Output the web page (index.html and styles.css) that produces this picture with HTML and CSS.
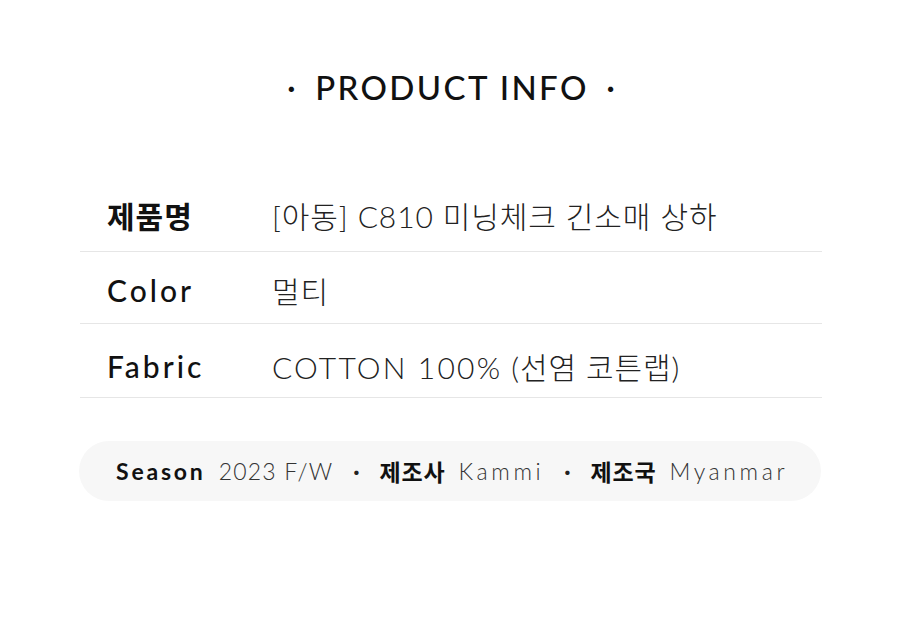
FILE: index.html
```html
<!DOCTYPE html>
<html lang="ko">
<head>
<meta charset="utf-8">
<link rel="stylesheet" href="styles.css">
</head>
<body>
<div class="page">
  <h1 class="title"><span class="dot">·</span><span class="title-text">PRODUCT INFO</span><span class="dot">·</span></h1>
  <div class="table">
    <div class="row row-name">
      <div class="label label-ko">제품명</div>
      <div class="value">[아동] C810 미닝체크 긴소매 상하</div>
    </div>
    <div class="row row-color">
      <div class="label">Color</div>
      <div class="value">멀티</div>
    </div>
    <div class="row row-fabric">
      <div class="label">Fabric</div>
      <div class="value"><span class="latin">COTTON 100%</span> (선염 코튼랩)</div>
    </div>
  </div>
  <div class="pill">
    <span class="k">Season</span><span class="v">2023 F/W</span>
    <span class="sep">·</span>
    <span class="k ko">제조사</span><span class="v wide">Kammi</span>
    <span class="sep">·</span>
    <span class="k ko">제조국</span><span class="v wide">Myanmar</span>
  </div>
</div>
</body>
</html>
```
FILE: styles.css
```css
* { box-sizing: border-box; }
html, body { margin: 0; padding: 0; background: #fff; }
body {
  font-family: "Lato", "Noto Sans CJK KR", sans-serif;
  color: #111;
}
.page {
  width: 900px;
  padding: 62px 78px 0 80px;
}
.title {
  margin: 0;
  height: 50px;
  display: flex;
  justify-content: center;
  align-items: center;
  gap: 20px;
  font-size: 33px;
  font-weight: 500;
  letter-spacing: 2.4px;
  color: #111;
}
.title .dot { font-size: 28px; font-weight: 700; letter-spacing: 0; }
.title .title-text { margin-right: -2px; }
.table {
  margin-top: 70px;
}
.row {
  display: flex;
  align-items: center;
  height: 72px;
  border-bottom: 1px solid #e6e6e6;
  font-size: 30px;
}
.row-name { height: 70px; padding-bottom: 4px; }
.row-color { padding-top: 4px; }
.row-fabric { height: 74px; padding-top: 10px; }
.label {
  width: 192px;
  padding-left: 27px;
  font-weight: 500;
  letter-spacing: 3px;
  color: #111;
}
.label-ko { font-weight: 700; letter-spacing: 1px; }
.value {
  font-weight: 300;
  letter-spacing: 0.9px;
  color: #222;
}
.value .latin { letter-spacing: 2.2px; }
.pill {
  margin-top: 43px;
  height: 60px;
  width: 742px;
  margin-left: -1px;
  border-radius: 30px;
  background: #f7f7f7;
  display: flex;
  align-items: center;
  padding-left: 37px;
  font-size: 23px;
}
.pill .k { font-weight: 700; color: #111; margin-right: 13px; letter-spacing: 2.8px; }
.pill .k.ko { letter-spacing: 0.8px; }
.pill .v { font-weight: 300; color: #333; letter-spacing: 1.2px; }
.pill .v.wide { letter-spacing: 3.6px; }
.pill .sep { margin: 0 20px; color: #222; font-weight: 700; }
```
